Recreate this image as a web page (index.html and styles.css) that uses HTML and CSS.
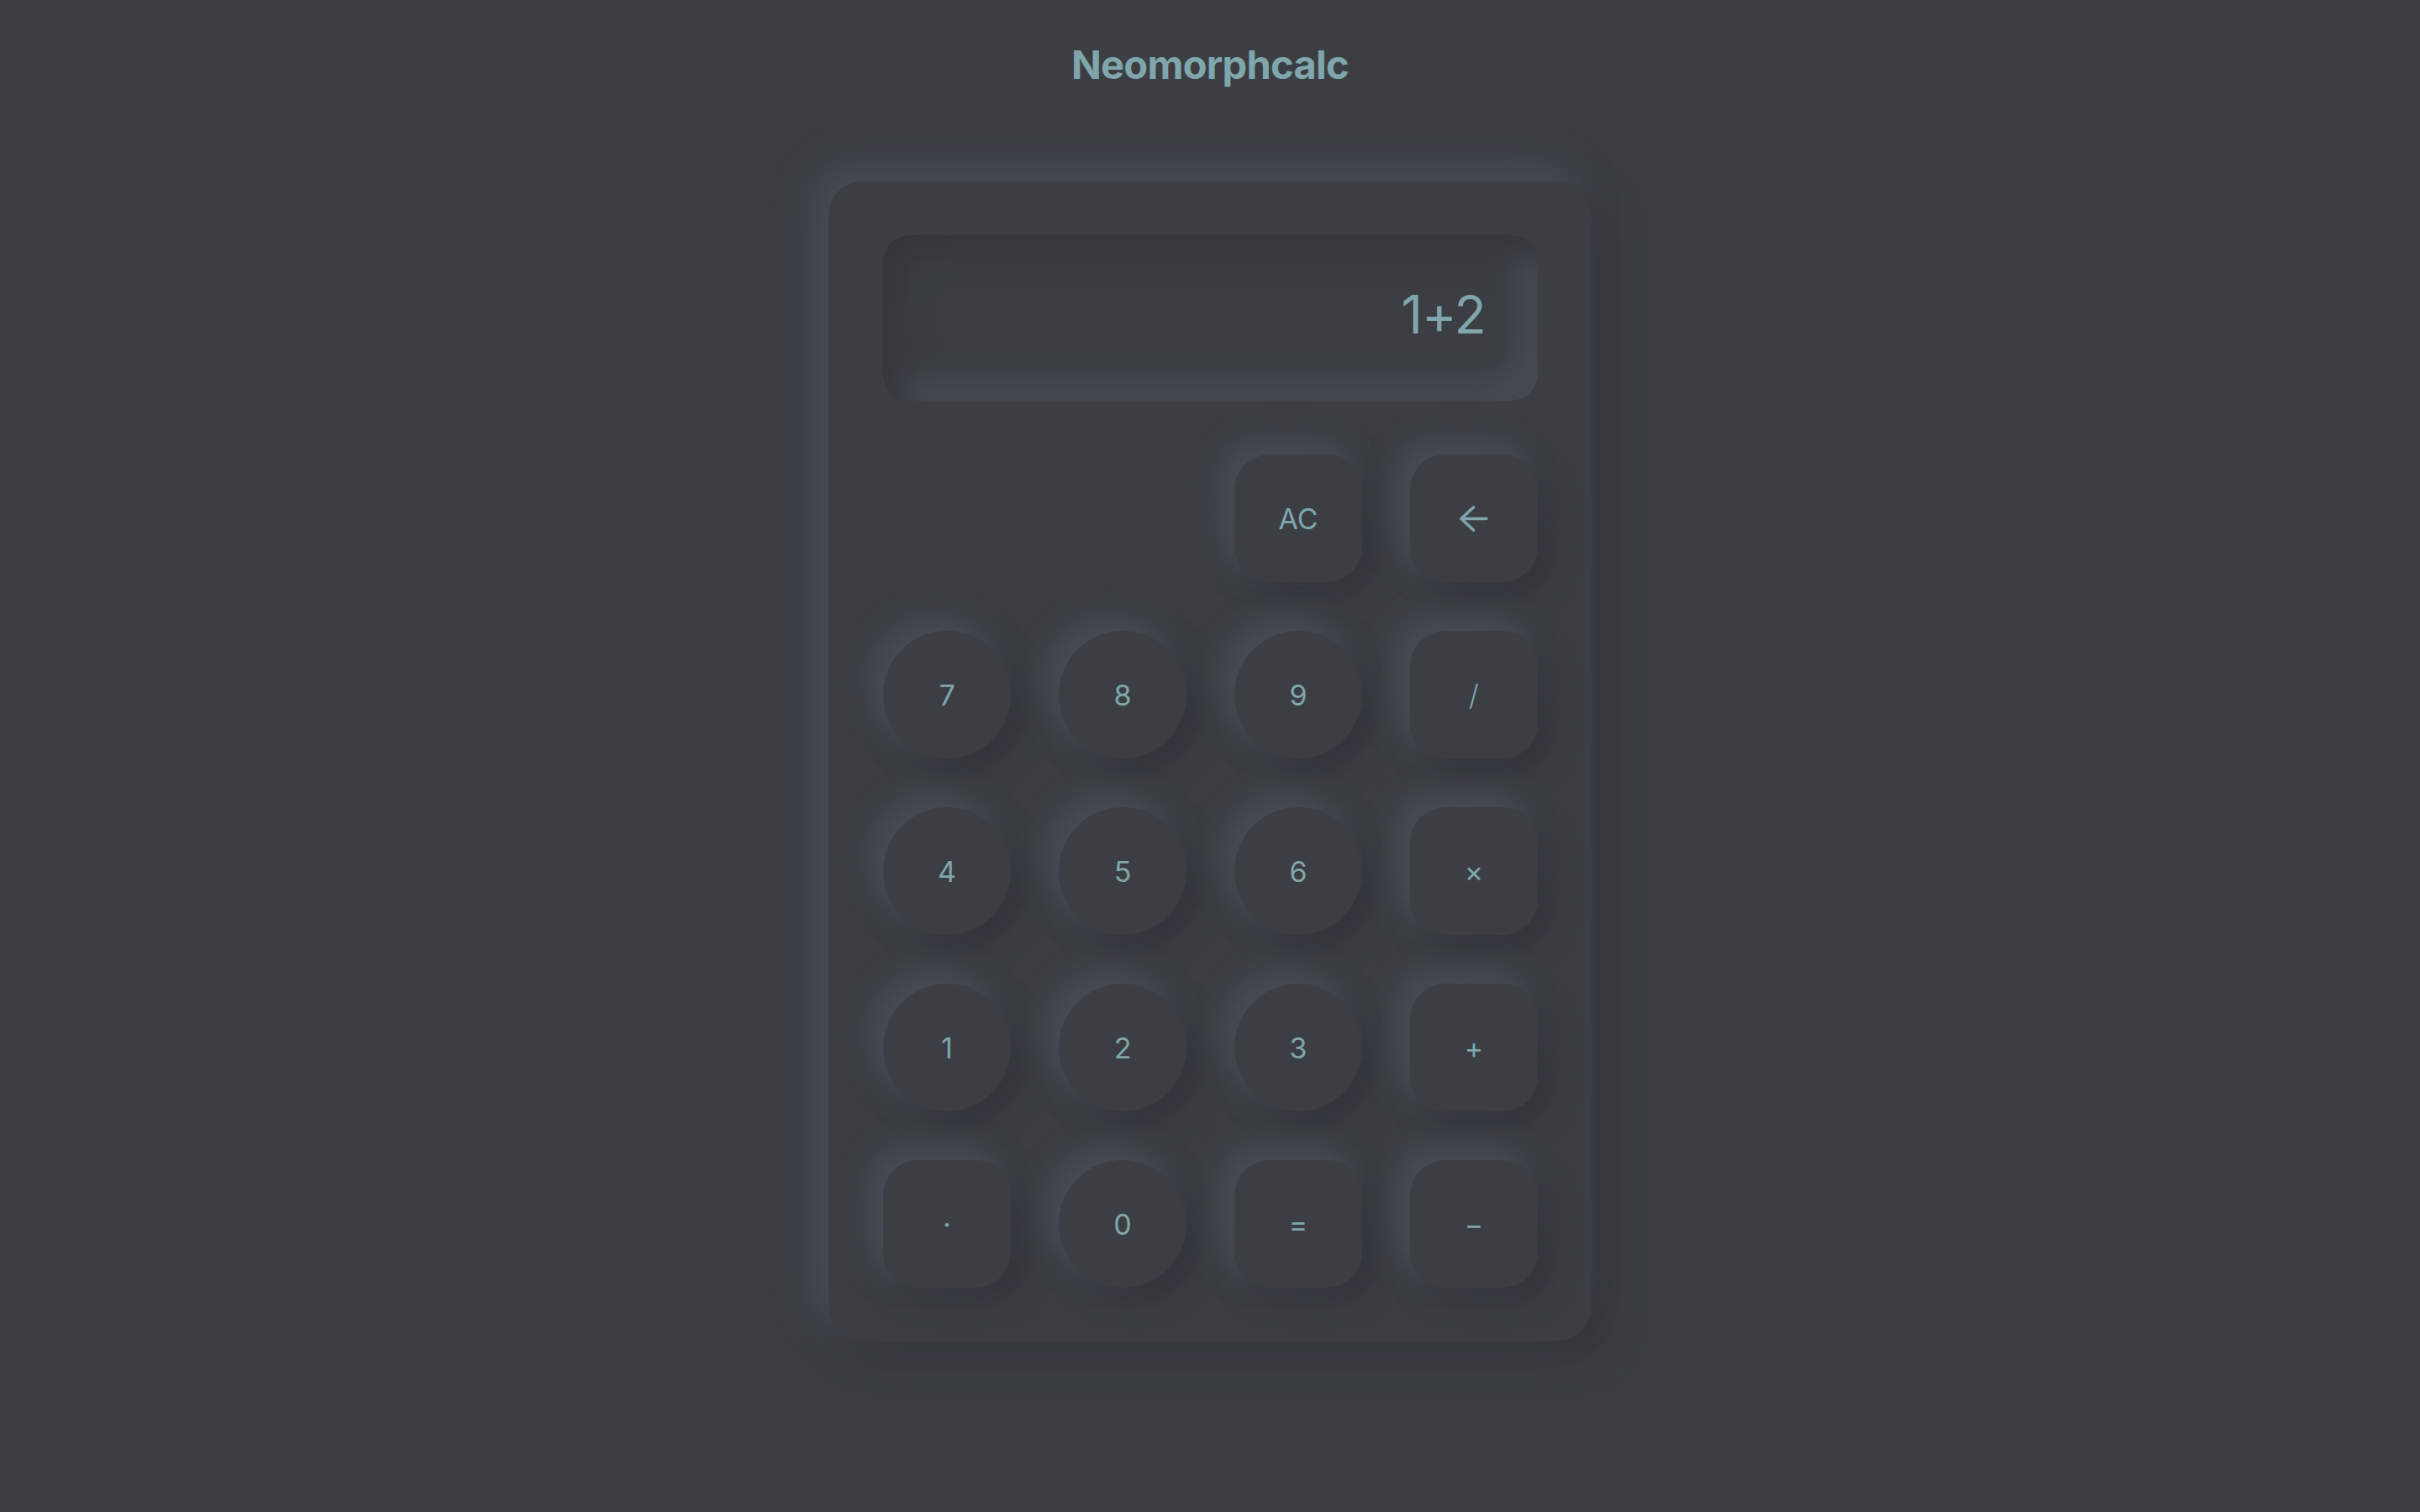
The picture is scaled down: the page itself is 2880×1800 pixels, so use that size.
FILE: index.html
```html
<!DOCTYPE html>
<html lang="en">
<head>
<meta charset="utf-8">
<title>Neomorphcalc</title>
<link rel="stylesheet" href="styles.css">
</head>
<body>
<main class="page">
  <h1 class="title">Neomorphcalc</h1>
  <section class="calc">
    <div class="display"><span class="display-text">1+2</span></div>
    <div class="keys">
      <button class="key key-sq key-ac">AC</button>
      <button class="key key-sq" aria-label="backspace">
        <svg class="icon-back" width="34" height="31" viewBox="0 0 34 31" fill="none" stroke="currentColor" stroke-width="3.6" stroke-linecap="round" stroke-linejoin="round"><path d="M2 15.5H32M16.5 2L2 15.5L16.5 29"/></svg>
      </button>
      <button class="key key-round">7</button>
      <button class="key key-round">8</button>
      <button class="key key-round">9</button>
      <button class="key key-sq key-thin">/</button>
      <button class="key key-round">4</button>
      <button class="key key-round">5</button>
      <button class="key key-round">6</button>
      <button class="key key-sq">×</button>
      <button class="key key-round">1</button>
      <button class="key key-round">2</button>
      <button class="key key-round">3</button>
      <button class="key key-sq">+</button>
      <button class="key key-sq">·</button>
      <button class="key key-round">0</button>
      <button class="key key-sq">=</button>
      <button class="key key-sq">−</button>
    </div>
  </section>
</main>
</body>
</html>
```
FILE: styles.css
```css
* { box-sizing: border-box; }
html, body {
  margin: 0;
  padding: 0;
  background: #3b3f44;
  height: 100%;
}
body {
  font-family: Inter, "Noto Sans", "Liberation Sans", sans-serif;
  color: #80a6ac;
}
.page {
  display: flex;
  flex-direction: column;
  align-items: center;
  padding-top: 49px;
}
.title {
  margin: 0;
  font-size: 47px;
  line-height: 56px;
  font-weight: 700;
  color: #80a6ac;
  letter-spacing: -0.7px;
}
.calc {
  margin-top: 111px;
  width: 908px;
  padding: 64px 64px 63px 65px;
  border-radius: 40px;
  background: #3b3f44;
  box-shadow: -18px -18px 44px #474c55, 18px 18px 44px #31343a;
}
.display {
  height: 197px;
  border-radius: 32px;
  background: #3b3f44;
  box-shadow: inset 20px 20px 40px #33363b, inset -20px -20px 40px #494e57;
  display: flex;
  align-items: center;
  justify-content: flex-end;
  padding-right: 62px;
}
.display-text {
  font-size: 63px;
  font-weight: 400;
  color: #80a6ac;
  letter-spacing: -1px;
  line-height: 1;
  margin-top: -9px;
}
.keys {
  margin-top: 64px;
  display: grid;
  grid-template-columns: repeat(4, 152px);
  grid-auto-rows: 152px;
  column-gap: 57px;
  row-gap: 58px;
}
.key-ac { grid-column: 3; }
.key {
  width: 152px;
  height: 152px;
  border: none;
  padding: 0;
  margin: 0;
  background: #3b3f44;
  color: #80a6ac;
  font-family: Inter, "Noto Sans", "Liberation Sans", sans-serif;
  font-size: 34px;
  font-weight: 400;
  display: flex;
  align-items: center;
  justify-content: center;
  box-shadow: -15px -15px 34px #484d56, 15px 15px 34px #31343a;
}
.key-sq { border-radius: 42px; }
.key-round { border-radius: 50%; }
.key-thin { font-weight: 300; }
.icon-back { display: block; }
```
